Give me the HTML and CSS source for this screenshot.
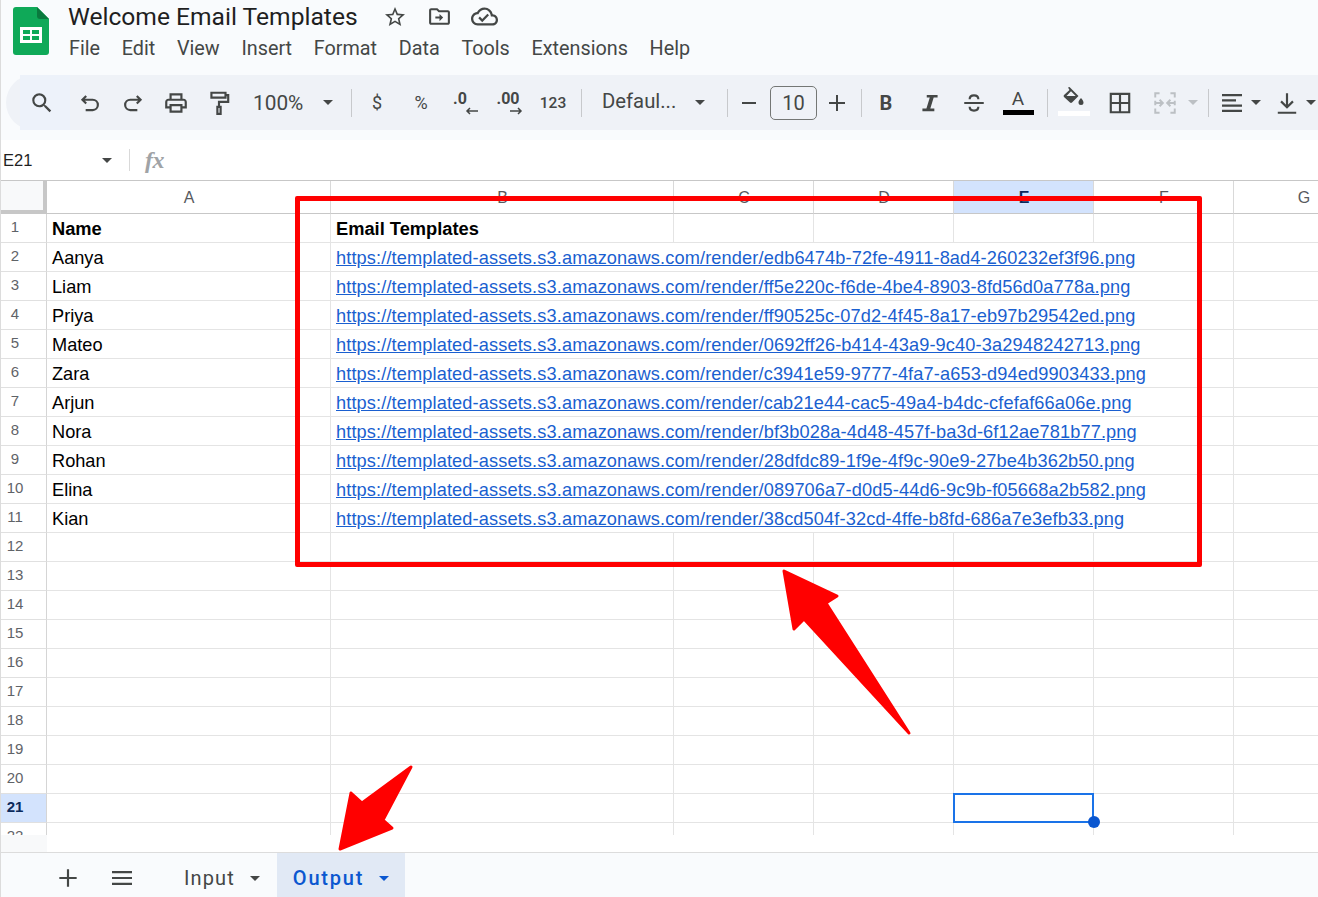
FILE: index.html
```html
<!DOCTYPE html>
<html lang="en">
<head>
<meta charset="utf-8">
<title>Welcome Email Templates</title>
<link rel="stylesheet" href="styles.css">
</head>
<body>
<div class="app">
  <header class="header">
    <svg class="logo" viewBox="0 0 36 48"><path d="M3 0h21l12 12v33a3 3 0 0 1-3 3H3a3 3 0 0 1-3-3V3a3 3 0 0 1 3-3z" fill="#0fa958"/><path d="M24 0l12 12H27a3 3 0 0 1-3-3z" fill="#0a7a3e"/><path d="M7 20h22v16H7z" fill="#fff"/><path d="M10 23h7v4h-7zM19 23h7v4h-7zM10 29h7v4h-7zM19 29h7v4h-7z" fill="#0fa958"/></svg>
    <div class="header-main">
      <div class="title-row">
        <span class="title">Welcome Email Templates</span>
        <svg class="title-icon star" viewBox="0 0 24 24"><path d="M22 9.24l-7.19-.62L12 2 9.19 8.63 2 9.24l5.46 4.73L5.82 21 12 17.27 18.18 21l-1.63-7.03L22 9.24zM12 15.4l-3.76 2.27 1-4.28-3.32-2.88 4.38-.38L12 6.1l1.71 4.04 4.38.38-3.32 2.88 1 4.28L12 15.4z"/></svg>
        <svg class="title-icon move" viewBox="0 0 24 24"><path d="M20 6h-8l-2-2H4c-1.1 0-2 .9-2 2v12c0 1.1.9 2 2 2h16c1.1 0 2-.9 2-2V8c0-1.1-.9-2-2-2zm0 12H4V6h5.17l2 2H20v10zm-8-4H8v-2h4V9.5l3.5 3.5-3.5 3.500V14z"/></svg>
        <svg class="title-icon cloud" viewBox="0 0 24 24"><path d="M19.35 10.04C18.67 6.59 15.64 4 12 4 9.11 4 6.6 5.64 5.35 8.04 2.34 8.36 0 10.91 0 14c0 3.31 2.69 6 6 6h13c2.76 0 5-2.24 5-5 0-2.640-2.050-4.780-4.650-4.960zM19 18H6c-2.210 0-4-1.790-4-4 0-2.050 1.530-3.760 3.560-3.970l1.070-.11.5-.95C8.080 7.140 9.940 6 12 6c2.620 0 4.880 1.860 5.390 4.430l.3 1.500 1.530.11c1.560.1 2.780 1.410 2.780 2.960 0 1.650-1.350 3-3 3zm-9-3.820l-2.090-2.090L6.500 13.500 10 17l6.010-6.010-1.410-1.410z"/></svg>
      </div>
      <nav class="menu">
        <span>File</span><span>Edit</span><span>View</span><span>Insert</span><span>Format</span><span>Data</span><span>Tools</span><span>Extensions</span><span>Help</span>
      </nav>
    </div>
  </header>

  <div class="toolbar">
    <span class="search-wash"></span>
    <div class="tool"><svg viewBox="0 0 24 24"><path d="M15.500 14h-.79l-.28-.27A6.471 6.471 0 0 0 16 9.500 6.500 6.500 0 1 0 9.500 16c1.610 0 3.090-.59 4.230-1.570l.27.28v.79l5 4.990L20.490 19l-4.990-5zm-6 0C7.010 14 5 11.990 5 9.500S7.010 5 9.500 5 14 7.010 14 9.500 11.990 14 9.500 14z"/></svg></div>
    <div class="group group-history">
      <div class="tool"><svg class="line" viewBox="0 0 24 24"><path d="M8.500 5.500L5 9l3.500 3.500M5 9h9.500a4.750 4.750 0 0 1 0 9.500H8"/></svg></div>
      <div class="tool"><svg class="line" viewBox="0 0 24 24"><path d="M15.500 5.500L19 9l-3.500 3.500M19 9H9.500a4.750 4.750 0 0 0 0 9.500H16"/></svg></div>
      <div class="tool"><svg viewBox="0 0 24 24"><path d="M19 8h-1V3H6v5H5c-1.660 0-3 1.340-3 3v6h4v4h12v-4h4v-6c0-1.660-1.340-3-3-3zM8 5h8v3H8V5zm8 14H8v-4h8v4zm2-4v-2H6v2H4v-4c0-.55.45-1 1-1h14c.55 0 1 .45 1 1v4h-2z"/></svg></div>
      <div class="tool"><svg class="line" viewBox="0 0 24 24"><path d="M5 2.500h13v4.500H5zM18 4.750h2.500V11H12v4.500M10.500 15.500h3v6.500h-3z"/></svg></div>
    </div>
    <span class="tool-text zoom-value">100%</span>
    <span class="caret zoom-caret"></span>
    <span class="sep sep-a"></span>
    <div class="group group-number">
      <div class="tool glyph">$</div>
      <div class="tool glyph">%</div>
      <div class="tool decimal"><span>.0</span><svg class="line" viewBox="0 0 16 8"><path d="M14 4H3M6 1L3 4l3 3"/></svg></div>
      <div class="tool decimal decimal-more"><span>.00</span><svg class="line" viewBox="0 0 16 8"><path d="M2 4h11M10 1l3 3-3 3"/></svg></div>
      <div class="tool glyph small">123</div>
    </div>
    <span class="sep sep-b"></span>
    <span class="tool-text font-name">Defaul...</span>
    <span class="caret font-caret"></span>
    <span class="sep sep-c"></span>
    <span class="step step-minus"></span>
    <span class="size-box">10</span>
    <span class="step step-plus"></span>
    <span class="sep sep-d"></span>
    <div class="group group-format">
      <div class="tool glyph bold">B</div>
      <div class="tool"><svg viewBox="0 0 24 24"><path d="M9 4.500h10v2.500h-3.600l-3.100 10H16v2.500H5V17h3.700l3.100-10H9z"/></svg></div>
      <div class="tool"><svg class="line" viewBox="0 0 24 24"><path d="M3 12h18M16 8.500C16 6.500 14.500 5 12 5S8 6.500 8 8.500M8 15.500C8 17.500 9.500 19 12 19s4-1.500 4-3.500"/></svg></div>
      <div class="tool text-colour"><span>A</span><i></i></div>
    </div>
    <span class="sep sep-e"></span>
    <div class="group group-cell">
      <div class="tool fill"><svg viewBox="0 0 24 20"><path d="M6 0.500L7.500 0l2 2 7 7-6.500 6.500a1.500 1.500 0 0 1-2 0L2 10a1.500 1.500 0 0 1 0-2l5.500-5zM4.500 9h9.200L9 4.300zM19 11s2.500 2.800 2.500 4.500a2.500 2.500 0 0 1-5 0C16.500 13.800 19 11 19 11z"/></svg><i></i></div>
      <div class="tool"><svg viewBox="0 0 24 24"><path d="M2.500 2.500h19v19h-19zM4.500 4.500V11H11V4.500zM13 4.500V11h6.500V4.500zM4.500 13v6.500H11V13zM13 13v6.500h6.500V13z" fill-rule="evenodd"/></svg></div>
      <div class="tool muted"><svg class="line" viewBox="0 0 24 24"><path d="M7 3H3v4M3 10v4M3 17v4h4M17 3h4v4M21 10v4M21 17v4h-4M3 12h7M7 9l3 3-3 3M21 12h-7M17 9l-3 3 3 3"/></svg></div>
    </div>
    <span class="caret muted-caret merge-caret"></span>
    <span class="sep sep-f"></span>
    <div class="tool align"><svg viewBox="0 0 24 24"><path d="M2 3h20v2.200H2zM2 8.300h14v2.200H2zM2 13.500h20v2.200H2zM2 18.800h20V21H2z"/></svg></div>
    <span class="caret align-caret"></span>
    <div class="tool valign"><svg class="line" viewBox="0 0 24 24"><path d="M12 3v13M6.500 10.500L12 16l5.500-5.500M3.500 21h17"/></svg></div>
    <span class="caret align-caret"></span>
  </div>

  <div class="formula-bar">
    <span class="name-box">E21</span>
    <span class="caret name-caret"></span>
    <span class="sep name-sep"></span>
    <span class="fx">fx</span>
  </div>

  <div class="sheet">
    <div class="row row-head">
      <div class="corner"></div><div class="col">A</div><div class="col">B</div><div class="col">C</div><div class="col">D</div><div class="col col-active">E</div><div class="col">F</div><div class="col">G</div>
    </div>
    <div class="row"><div class="num">1</div><div class="cell strong">Name</div><div class="cell strong">Email Templates</div><div class="cell"></div><div class="cell"></div><div class="cell"></div><div class="cell"></div><div class="cell"></div></div>
    <div class="row"><div class="num">2</div><div class="cell">Aanya</div><div class="cell wide"><a>https://templated-assets.s3.amazonaws.com/render/edb6474b-72fe-4911-8ad4-260232ef3f96.png</a></div><div class="cell"></div></div>
    <div class="row"><div class="num">3</div><div class="cell">Liam</div><div class="cell wide"><a>https://templated-assets.s3.amazonaws.com/render/ff5e220c-f6de-4be4-8903-8fd56d0a778a.png</a></div><div class="cell"></div></div>
    <div class="row"><div class="num">4</div><div class="cell">Priya</div><div class="cell wide"><a>https://templated-assets.s3.amazonaws.com/render/ff90525c-07d2-4f45-8a17-eb97b29542ed.png</a></div><div class="cell"></div></div>
    <div class="row"><div class="num">5</div><div class="cell">Mateo</div><div class="cell wide"><a>https://templated-assets.s3.amazonaws.com/render/0692ff26-b414-43a9-9c40-3a2948242713.png</a></div><div class="cell"></div></div>
    <div class="row"><div class="num">6</div><div class="cell">Zara</div><div class="cell wide"><a>https://templated-assets.s3.amazonaws.com/render/c3941e59-9777-4fa7-a653-d94ed9903433.png</a></div><div class="cell"></div></div>
    <div class="row"><div class="num">7</div><div class="cell">Arjun</div><div class="cell wide"><a>https://templated-assets.s3.amazonaws.com/render/cab21e44-cac5-49a4-b4dc-cfefaf66a06e.png</a></div><div class="cell"></div></div>
    <div class="row"><div class="num">8</div><div class="cell">Nora</div><div class="cell wide"><a>https://templated-assets.s3.amazonaws.com/render/bf3b028a-4d48-457f-ba3d-6f12ae781b77.png</a></div><div class="cell"></div></div>
    <div class="row"><div class="num">9</div><div class="cell">Rohan</div><div class="cell wide"><a>https://templated-assets.s3.amazonaws.com/render/28dfdc89-1f9e-4f9c-90e9-27be4b362b50.png</a></div><div class="cell"></div></div>
    <div class="row"><div class="num">10</div><div class="cell">Elina</div><div class="cell wide"><a>https://templated-assets.s3.amazonaws.com/render/089706a7-d0d5-44d6-9c9b-f05668a2b582.png</a></div><div class="cell"></div></div>
    <div class="row"><div class="num">11</div><div class="cell">Kian</div><div class="cell wide"><a>https://templated-assets.s3.amazonaws.com/render/38cd504f-32cd-4ffe-b8fd-686a7e3efb33.png</a></div><div class="cell"></div></div>
    <div class="row"><div class="num">12</div><div class="cell"></div><div class="cell"></div><div class="cell"></div><div class="cell"></div><div class="cell"></div><div class="cell"></div><div class="cell"></div></div>
    <div class="row"><div class="num">13</div><div class="cell"></div><div class="cell"></div><div class="cell"></div><div class="cell"></div><div class="cell"></div><div class="cell"></div><div class="cell"></div></div>
    <div class="row"><div class="num">14</div><div class="cell"></div><div class="cell"></div><div class="cell"></div><div class="cell"></div><div class="cell"></div><div class="cell"></div><div class="cell"></div></div>
    <div class="row"><div class="num">15</div><div class="cell"></div><div class="cell"></div><div class="cell"></div><div class="cell"></div><div class="cell"></div><div class="cell"></div><div class="cell"></div></div>
    <div class="row"><div class="num">16</div><div class="cell"></div><div class="cell"></div><div class="cell"></div><div class="cell"></div><div class="cell"></div><div class="cell"></div><div class="cell"></div></div>
    <div class="row"><div class="num">17</div><div class="cell"></div><div class="cell"></div><div class="cell"></div><div class="cell"></div><div class="cell"></div><div class="cell"></div><div class="cell"></div></div>
    <div class="row"><div class="num">18</div><div class="cell"></div><div class="cell"></div><div class="cell"></div><div class="cell"></div><div class="cell"></div><div class="cell"></div><div class="cell"></div></div>
    <div class="row"><div class="num">19</div><div class="cell"></div><div class="cell"></div><div class="cell"></div><div class="cell"></div><div class="cell"></div><div class="cell"></div><div class="cell"></div></div>
    <div class="row"><div class="num">20</div><div class="cell"></div><div class="cell"></div><div class="cell"></div><div class="cell"></div><div class="cell"></div><div class="cell"></div><div class="cell"></div></div>
    <div class="row"><div class="num num-active">21</div><div class="cell"></div><div class="cell"></div><div class="cell"></div><div class="cell"></div><div class="cell"></div><div class="cell"></div><div class="cell"></div></div>
    <div class="row"><div class="num">22</div><div class="cell"></div><div class="cell"></div><div class="cell"></div><div class="cell"></div><div class="cell"></div><div class="cell"></div><div class="cell"></div></div>
    <div class="selection"><span class="handle"></span></div>
  </div>

  <div class="scroll-strip"><span class="scroll-gutter"></span></div>

  <footer class="tabs">
    <svg class="tab-icon plus" viewBox="0 0 24 24"><path d="M20 13h-7v7h-2v-7H4v-2h7V4h2v7h7z"/></svg>
    <svg class="tab-icon list" viewBox="0 0 24 24"><path d="M2 5h20v2.200H2zM2 10.900h20v2.200H2zM2 16.800h20V19H2z"/></svg>
    <div class="tab tab-input"><span>Input</span><span class="caret"></span></div>
    <div class="tab tab-active"><span>Output</span><span class="caret"></span></div>
  </footer>

  <div class="callout-box"></div>
  <svg class="arrows" viewBox="0 0 1318 897">
    <path d="M784 571L837 596 826 603 909 733 804 619 794 629z"/>
    <path d="M340 849L351 793 362 803 411 767 383 820 392 828z"/>
  </svg>
</div>
</body>
</html>
```

FILE: styles.css
```css
* { box-sizing: border-box; }
html, body { margin: 0; height: 100%; }
body { background: #fff; font-family: "Liberation Sans", Arial, sans-serif; color: #000; overflow: hidden; }

.app { position: relative; width: 1318px; height: 897px; overflow: hidden; background: #f9fbfd; border-left: 1px solid #dcdcdc; display: flex; flex-direction: column; }

/* Title and menu */
.header { height: 75px; display: flex; flex: none; }
.logo { width: 36px; height: 48px; margin: 7px 0 0 12px; flex: none; }
.header-main { margin-left: 19px; display: flex; flex-direction: column; }
.title-row { height: 33px; display: flex; align-items: center; }
.title { font-family: Roboto, sans-serif; font-size: 24.600px; color: #1f1f1f; }
.title-icon { fill: #444746; flex: none; }
.star { width: 24px; height: 24px; margin-left: 25px; }
.move { width: 25px; height: 25px; margin-left: 20px; }
.cloud { width: 27px; height: 27px; margin-left: 19px; }
.menu { display: flex; gap: 21.700px; font-family: Roboto, sans-serif; font-size: 19.800px; color: #444746; margin: 4px 0 0 1px; }

/* Toolbar */
.toolbar { position: relative; height: 55px; flex: none; margin-left: 5px; width: 1400px; background: #eff2f7; border-radius: 28px 0 0 28px; display: flex; align-items: center; padding-left: 20px; }
.search-wash { position: absolute; left: 14px; top: 0; bottom: 0; width: 50px; background: #edf2fa; }
.tool { position: relative; width: 32px; height: 32px; flex: none; display: flex; flex-direction: column; align-items: center; justify-content: center; color: #444746; }
.tool svg { width: 26px; height: 26px; fill: #444746; display: block; }
.tool svg.line, svg.line { fill: none; stroke: #444746; stroke-width: 2; }
.group { display: flex; flex: none; }
.group-history { gap: 11px; margin-left: 16px; }
.group-number { gap: 12px; margin-left: 9px; }
.group-format { gap: 12px; margin-left: 8px; }
.group-cell { gap: 13.500px; margin-left: 10px; }
.tool-text { font-family: Roboto, sans-serif; color: #444746; flex: none; }
.zoom-value { margin-left: 18px; width: 51px; font-size: 20.800px; }
.font-name { margin-left: 20px; width: 74px; font-size: 20.300px; padding-bottom: 3px; }
.caret { display: block; flex: none; width: 0; height: 0; border-left: 5.500px solid transparent; border-right: 5.500px solid transparent; border-top: 5.500px solid #444746; }
.zoom-caret { margin-left: 19px; }
.font-caret { margin-left: 19px; }
.merge-caret { margin-left: 7px; }
.muted-caret { border-top-color: #bcc0c4; }
.align-caret { margin-left: 3px; }
.sep { width: 1px; height: 28px; background: #c7c9cc; flex: none; }
.sep-a { margin-left: 18px; }
.sep-b { margin-left: 12px; }
.sep-c { margin-left: 22px; }
.sep-d { margin-left: 16px; }
.sep-e { margin-left: 13px; }
.sep-f { margin-left: 10px; }
.glyph { font-family: Roboto, sans-serif; font-size: 18px; font-weight: 400; }
.glyph.small { font-size: 15.500px; font-weight: 500; }
.glyph.bold { font-size: 20px; font-weight: 700; }
.decimal { font-family: Roboto, sans-serif; font-weight: 700; font-size: 16px; line-height: 15px; }
.decimal span { margin-left: -10px; }
.decimal svg.line { width: 16px; height: 8px; stroke-width: 1.500; margin: 1px 0 0 14px; }
.decimal-more span { margin-left: -2px; }
.step { position: relative; width: 16px; height: 2px; background: #444746; flex: none; }
.step-minus { margin-left: 14px; width: 14px; }
.step-plus { margin-left: 12px; }
.step-plus::after { content: ""; position: absolute; left: 7px; top: -7px; width: 2px; height: 16px; background: #444746; }
.size-box { width: 47px; height: 34px; margin-left: 14px; border: 1px solid #747775; border-radius: 5px; flex: none; display: flex; align-items: center; justify-content: center; font-family: Roboto, sans-serif; font-size: 20px; color: #444746; padding-top: 1px; }
.text-colour { font-family: Roboto, sans-serif; font-size: 19px; line-height: 20px; justify-content: flex-start; padding-top: 2px; }
.text-colour i { display: block; width: 31px; height: 5px; background: #000; margin-top: 1px; }
.fill { justify-content: flex-start; }
.fill svg { width: 24px; height: 20px; }
.fill i { display: block; width: 32px; height: 5px; background: #fff; margin-top: 4px; }
.muted svg.line { stroke: #bcc0c4; stroke-width: 1.800; }
.align { margin-left: 7px; }
.align svg { width: 24px; height: 24px; }
.valign { margin-left: 10px; }

/* Name box and formula bar */
.formula-bar { height: 41px; margin-top: 10px; flex: none; background: #fff; border-bottom: 1px solid #c7c7c7; display: flex; align-items: center; padding-left: 2px; }
.name-box { width: 98px; font-size: 16.500px; color: #1f1f1f; }
.name-caret { margin-left: 1px; }
.name-sep { height: 22px; margin-left: 17px; background: #d9d9d9; }
.fx { margin-left: 15px; font-family: "Liberation Serif", serif; font-style: italic; font-weight: 700; font-size: 24px; color: #a0a3a6; letter-spacing: -.5px; }

/* Grid */
.sheet { position: relative; height: 654px; flex: none; background: #fff; overflow: hidden; }
.row { display: grid; grid-template-columns: 46px 284px 343px 140px 140px 140px 140px 140px; height: 29px; }
.row-head { height: 33px; }
.corner { background: #f8f9fa; border-right: 4px solid #c7c7c7; border-bottom: 4px solid #c7c7c7; }
.col { display: flex; align-items: center; justify-content: center; background: #fff; border-right: 1px solid #d9d9d9; border-bottom: 1px solid #c7c7c7; font-size: 16px; color: #575a5e; padding: 1px 0 0 1px; }
.col-active { background: #d3e3fd; color: #0b2a5c; font-weight: 700; }
.num { display: flex; align-items: center; justify-content: center; padding: 0 17px 3px 0; font-size: 15px; color: #5f6368; background: #fff; border-right: 1px solid #d5d5d5; border-bottom: 1px solid #e0e0e0; }
.num-active { background: #d3e3fd; color: #0b2a5c; font-weight: 700; }
.cell { display: flex; align-items: center; padding: 2px 0 0 5px; font-size: 18.200px; color: #000; border-right: 1px solid #e4e4e4; border-bottom: 1px solid #e4e4e4; white-space: nowrap; min-width: 0; }
.strong { font-weight: 700; font-size: 18.300px; }
.wide { grid-column: span 5; }
.wide a { color: #1a5fd0; text-decoration: underline; letter-spacing: .125px; }
.selection { position: absolute; left: 952px; top: 612px; width: 141px; height: 30px; border: 2px solid #1a73e8; }
.handle { position: absolute; right: -8px; bottom: -7px; width: 12px; height: 12px; border-radius: 50%; background: #0b57d0; }

/* Sheet tabs */
.scroll-strip { height: 17px; flex: none; background: #fff; }
.scroll-gutter { display: block; width: 46px; height: 17px; background: #f8f9fa; }
.tabs { flex: 1; min-height: 0; border-top: 1px solid #dcdcdc; display: flex; align-items: stretch; background: #f9fbfd; }
.tab-icon { fill: #444746; flex: none; align-self: center; margin-top: 5px; }
.plus { width: 26px; height: 26px; margin-left: 54px; }
.list { width: 24px; height: 24px; margin-left: 29px; }
.tab { display: flex; align-items: center; font-family: Roboto, sans-serif; font-size: 20px; color: #444746; padding-top: 6px; flex: none; }
.tab-input { margin-left: 50px; padding-right: 17px; gap: 15px; letter-spacing: 1.100px; }
.tab-active { background: #e1e9f5; color: #0b57d0; font-weight: 500; padding-left: 16px; padding-right: 16px; gap: 15px; letter-spacing: 1.800px; }
.tab-active .caret { border-top-color: #0b57d0; }

/* Annotations drawn over the screenshot */
.callout-box { position: absolute; left: 294px; top: 196px; width: 907px; height: 371px; border: 5.500px solid #ff0000; border-radius: 2px; pointer-events: none; }
.arrows { position: absolute; left: -1px; top: 0; width: 1318px; height: 897px; pointer-events: none; fill: #ff0000; stroke: #ff0000; stroke-width: 3; stroke-linejoin: round; }
```
